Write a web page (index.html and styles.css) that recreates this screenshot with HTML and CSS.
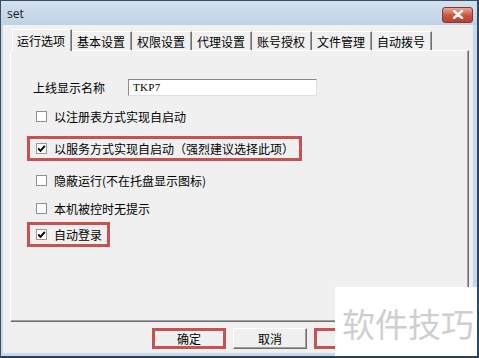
FILE: index.html
```html
<!DOCTYPE html>
<html lang="zh">
<head>
<meta charset="UTF-8">
<title>set</title>
<link rel="stylesheet" href="styles.css">
</head>
<body>
<div class="window">
  <div class="titlebar">
    <span class="title">set</span>
    <span class="close">
      <svg width="12" height="9" viewBox="0 0 12 9"><path d="M2 1 L10 8 M10 1 L2 8" stroke="#fff" stroke-width="2.4" stroke-linecap="round"/></svg>
    </span>
  </div>
  <div class="client">
    <div class="tabs">
      <div class="tab active">运行选项</div>
      <div class="tab">基本设置</div>
      <div class="tab">权限设置</div>
      <div class="tab">代理设置</div>
      <div class="tab">账号授权</div>
      <div class="tab">文件管理</div>
      <div class="tab">自动拨号</div>
    </div>
    <div class="panel">
      <div class="field">
        <span class="label">上线显示名称</span>
        <span class="input">TKP7</span>
      </div>
      <div class="check row1"><span class="box"></span><span>以注册表方式实现自启动</span></div>
      <div class="check mark row2"><span class="box on"><svg width="9" height="9" viewBox="0 0 9 9"><path d="M1.2 4.4 L3.5 6.8 L7.8 1.8" fill="none" stroke="#000" stroke-width="1.9"/></svg></span><span>以服务方式实现自启动（强烈建议选择此项）</span></div>
      <div class="check row3"><span class="box"></span><span>隐蔽运行(不在托盘显示图标)</span></div>
      <div class="check row4"><span class="box"></span><span>本机被控时无提示</span></div>
      <div class="check mark row5"><span class="box on"><svg width="9" height="9" viewBox="0 0 9 9"><path d="M1.2 4.4 L3.5 6.8 L7.8 1.8" fill="none" stroke="#000" stroke-width="1.9"/></svg></span><span>自动登录</span></div>
    </div>
    <div class="buttons">
      <span class="btn marked">确定</span>
      <span class="btn">取消</span>
      <span class="btn marked">应用</span>
    </div>
  </div>
  <div class="watermark">软件技巧</div>
</div>
</body>
</html>
```

FILE: styles.css
```css
body {
  margin: 0;
  font-family: "Noto Sans CJK SC", sans-serif;
  font-size: 12px;
  color: #000;
}
.window {
  position: relative;
  width: 479px;
  height: 358px;
  box-sizing: border-box;
  display: flex;
  flex-direction: column;
  background: #c8d8e9;
  border-top: 1px solid #3b4f63;
  border-left: 1px solid #3b4f63;
  border-right: 2px solid #2c4a66;
  border-bottom: 2px solid #26425a;
  overflow: hidden;
}
.titlebar {
  height: 24px;
  flex: none;
  display: flex;
  align-items: center;
  justify-content: space-between;
  padding: 0 4px 0 6px;
  background: linear-gradient(#d3e1ef, #bfd2e6);
}
.title {
  font-family: "Open Sans", sans-serif;
  font-size: 12px;
  color: #1a1a1a;
}
.close {
  width: 29px;
  height: 14px;
  margin-top: 3px;
  display: flex;
  align-items: center;
  justify-content: center;
  border: 1px solid #7d3b31;
  border-radius: 3px;
  background: linear-gradient(#e7a999, #c9533e 55%, #b8422f);
}
.client {
  flex: 1;
  display: flex;
  flex-direction: column;
  margin: 0 4px 3px 2px;
  background: #f0f0f0;
  border-right: 1px solid #e6edf4;
}
.tabs {
  display: flex;
  align-items: flex-end;
  margin: 4px 0 0 9px;
  height: 21px;
}
.tab {
  height: 19px;
  line-height: 19px;
  padding: 0 6px 0 5px;
  border-top: 1px solid #fff;
  border-left: 1px solid #fff;
  border-right: 1px solid #6e6e6e;
  box-shadow: inset -1px 0 #a0a0a0;
  box-sizing: border-box;
  white-space: nowrap;
}
.tab + .tab {
  border-left: none;
}
.tab.active {
  line-height: 22px;
  padding: 0 6px 0 4px;
  position: relative;
  background: #f0f0f0;
  margin-bottom: -1px;
  height: 22px;
}
.panel {
  height: 272px;
  box-sizing: border-box;
  margin: 0 3px 0 7px;
  padding-left: 16px;
  display: flex;
  flex-direction: column;
  align-items: flex-start;
  border-top: 1px solid #fff;
  border-left: 1px solid #fff;
  border-right: 1px solid #6e6e6e;
  border-bottom: 1px solid #6e6e6e;
  box-shadow: inset -1px -1px #a0a0a0;
}
.field {
  display: flex;
  align-items: center;
  margin-top: 28px;
  padding-left: 6px;
}
.label {
  width: 95px;
  line-height: 17px;
}
.input {
  width: 189px;
  height: 17px;
  box-sizing: border-box;
  padding-left: 4px;
  background: #fff;
  border-top: 1px solid #8a8a8a;
  border-left: 1px solid #8a8a8a;
  border-right: 1px solid #e0e0e0;
  border-bottom: 1px solid #e0e0e0;
  font-family: "Liberation Serif", serif;
  font-size: 11px;
  line-height: 15px;
  letter-spacing: 0.3px;
}
.check {
  display: flex;
  align-items: center;
  height: 25px;
  box-sizing: border-box;
  padding: 0 5px 0 6px;
  border: 3px solid transparent;
  margin-top: 7px;
  line-height: 16px;
  white-space: nowrap;
}
.check.mark {
  border-color: #c9514f;
}
.row1 { margin-top: 8px; }
.row4 { margin-top: 3px; }
.row5 { margin-top: 1px; }
.box {
  width: 11px;
  height: 11px;
  box-sizing: border-box;
  margin-right: 7px;
  border: 1px solid #8e8f8f;
  background: #fff;
  display: flex;
  align-items: center;
  justify-content: center;
}
.box.on {
  border-color: #9a9a9a;
}
.buttons {
  display: flex;
  gap: 7px;
  margin: 6px 0 0 149px;
}
.btn {
  width: 74px;
  height: 21px;
  box-sizing: border-box;
  display: flex;
  align-items: center;
  justify-content: center;
  background: #f0f0f0;
  border-top: 1px solid #fff;
  border-left: 1px solid #fff;
  border-right: 1px solid #6e6e6e;
  border-bottom: 1px solid #6e6e6e;
  box-shadow: inset -1px -1px #a0a0a0;
}
.btn.marked {
  border: 3px solid #c9514f;
  box-shadow: none;
}
.watermark {
  position: absolute;
  left: 334px;
  top: 286px;
  width: 146px;
  height: 72px;
  background: #fff;
  color: #cfcfcf;
  font-size: 33px;
  line-height: 72px;
  padding-left: 7px;
  box-sizing: border-box;
  white-space: nowrap;
}
```
